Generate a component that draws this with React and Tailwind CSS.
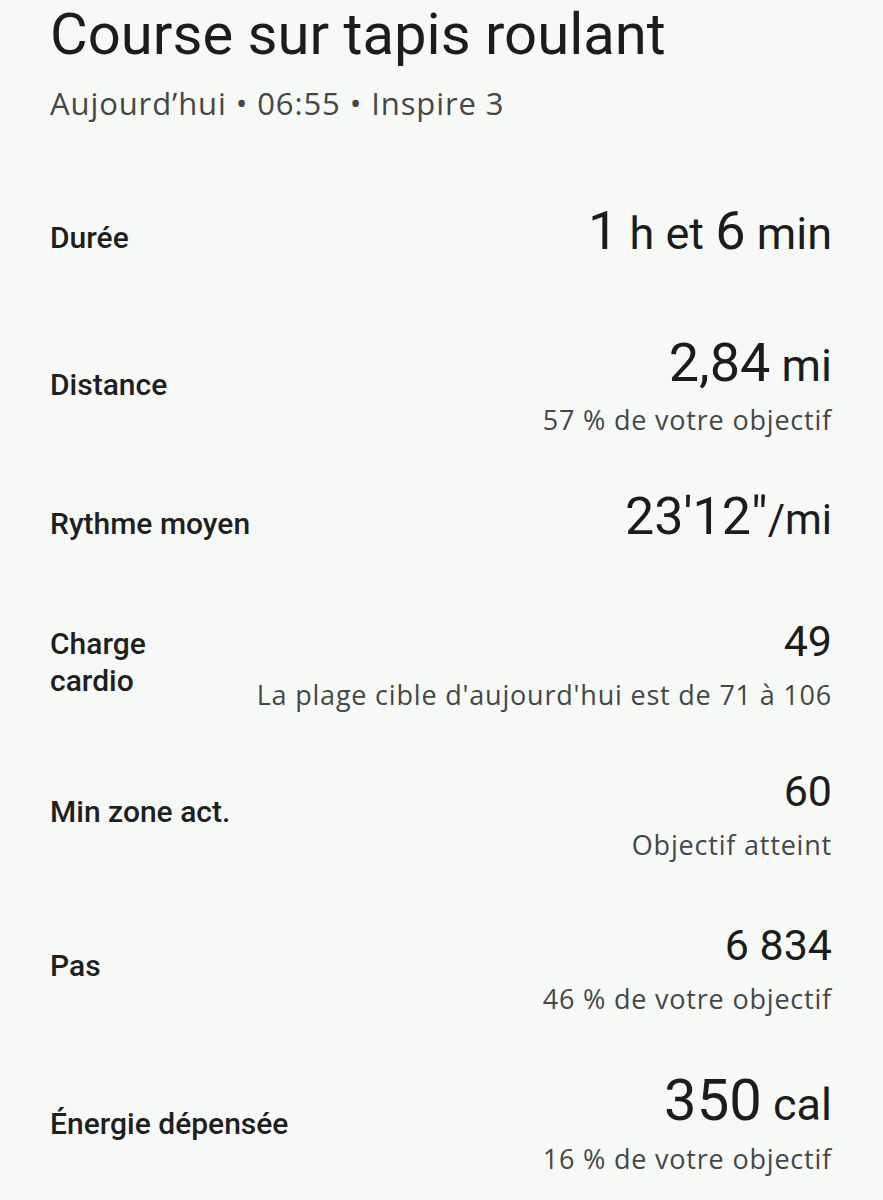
import React from "react";

const rows = [
  { label: "Durée", h: "h-[145px]", value: [["1", "bigL"], [" h et ", "unitL"], ["6", "bigL"], [" min", "unitL"]] },
  { label: "Distance", h: "h-[149px]", value: [["2,84", "bigL"], [" mi", "unitL"]], sub: "57 % de votre objectif" },
  { label: "Rythme moyen", h: "h-[128px]", value: [["23'12\"", "big"], ["/mi", "unit"]] },
  { label: ["Charge", "cardio"], h: "h-[149px]", value: [["49", "mid"]], sub: "La plage cible d'aujourd'hui est de 71 à 106" },
  { label: "Min zone act.", h: "h-[150px]", value: [["60", "mid"]], sub: "Objectif atteint" },
  { label: "Pas", h: "h-[158px]", value: [["6 834", "mid"]], sub: "46 % de votre objectif" },
  { label: "Énergie dépensée", h: "h-[158px]", value: [["350", "huge"], [" cal", "unitL"]], sub: "16 % de votre objectif" },
];

const sizeClass = {
  big: "text-[52px]",
  bigL: "text-[54px]",
  huge: "text-[58px]",
  unit: "text-[42px]",
  unitL: "text-[45px]",
  mid: "text-[43px]",
};

const Row = ({ row }) => (
  <div className={`flex items-center justify-between ${row.h}`}>
    <div className="text-[30px] font-medium leading-[37px] text-[#1f1f1f]">
      {Array.isArray(row.label) ? row.label.map((l) => <div key={l}>{l}</div>) : row.label}
    </div>
    <div className="flex flex-col items-end">
      <div className="leading-[60px] text-[#1b1c1b] whitespace-pre">
        {row.value.map(([t, s], i) => (
          <span key={i} className={sizeClass[s]}>
            {t}
          </span>
        ))}
      </div>
      {row.sub && (
        <div className="-mt-[3px] font-['Open_Sans',sans-serif] text-[27px] tracking-[0.8px] leading-[34px] text-[#444746]">
          {row.sub}
        </div>
      )}
    </div>
  </div>
);

export default function App() {
  return (
    <div className="min-h-screen bg-[#f7f9f7] pl-[50px] pr-[51px] font-['Roboto',sans-serif]">
      <div className="h-[165px] pt-[2px]">
        <h1 className="text-[58px] leading-[64px] text-[#1b1c1b]">Course sur tapis roulant</h1>
        <p className="mt-[18px] font-['Open_Sans',sans-serif] text-[31px] tracking-[0.9px] leading-[38px] text-[#444746]">
          Aujourd’hui • 06:55 • Inspire 3
        </p>
      </div>
      {rows.map((r, i) => (
        <Row key={i} row={r} />
      ))}
    </div>
  );
}
